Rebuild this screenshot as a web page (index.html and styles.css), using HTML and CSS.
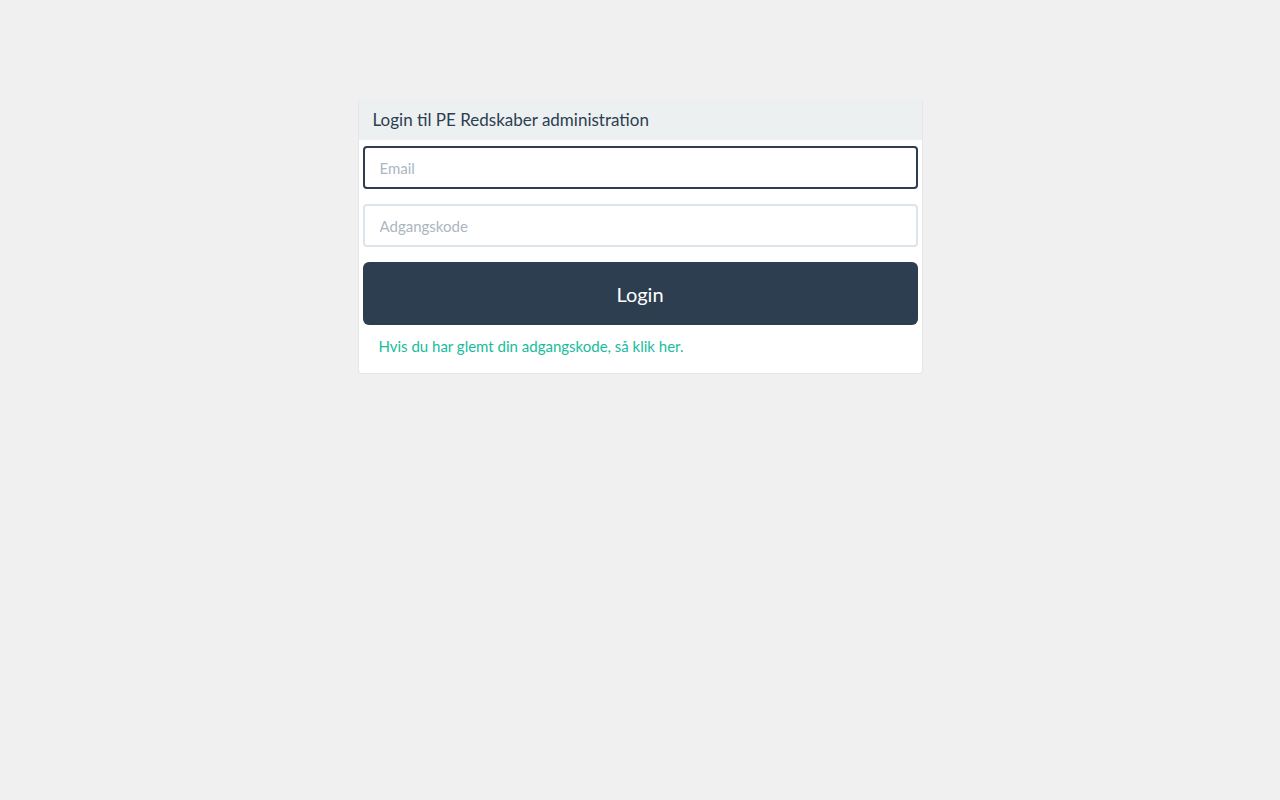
FILE: index.html
```html
<!DOCTYPE html>
<html lang="da">
<head>
    <meta charset="UTF-8">
    <meta name="viewport" content="width=device-width, initial-scale=1.0">
    <title>PE Redskaber - Login</title>
    <link rel="stylesheet" href="styles.css">
</head>
<body>
    <div class="login-panel">
        <div class="panel-heading">Login til PE Redskaber administration</div>
        <form class="panel-body">
            <input type="email" class="form-control focused" placeholder="Email">
            <input type="password" class="form-control" placeholder="Adgangskode">
            <button type="submit">Login</button>
            <a href="#" class="forgot">Hvis du har glemt din adgangskode, så klik her.</a>
        </form>
    </div>
</body>
</html>
```

FILE: styles.css
```css
body {
    font-family: Lato, "Open Sans", sans-serif;
    background-color: #f0f0f0;
    margin: 0;
    color: #2c3e50;
}
.login-panel {
    width: 565px;
    margin: 99px auto 0;
    background-color: white;
    border: 1px solid #e6e6e6;
    border-top: none;
    border-radius: 4px;
    box-sizing: border-box;
}
.panel-heading {
    background-color: #ecf0f1;
    padding: 9px 14px 9px;
    font-size: 17px;
    line-height: 23px;
    border-radius: 4px 4px 0 0;
}
.panel-body {
    display: flex;
    flex-direction: column;
    padding: 6px 4px 16px;
}
.form-control {
    height: 43px;
    padding: 0 15px;
    border: 2px solid #dce4ec;
    border-radius: 4px;
    box-sizing: border-box;
    font-family: inherit;
    font-size: 15px;
    color: #2c3e50;
    margin-bottom: 15px;
    outline: none;
}
.form-control.focused {
    border-color: #2c3e50;
}
.form-control::placeholder {
    color: #acb6c0;
}
button {
    height: 63px;
    background-color: #2c3e50;
    color: white;
    border: none;
    border-radius: 6px;
    font-family: inherit;
    font-size: 20px;
    cursor: pointer;
}
.forgot {
    color: #18bc9c;
    text-decoration: none;
    font-size: 15px;
    line-height: 21px;
    margin: 11px 0 0 16px;
}
```
